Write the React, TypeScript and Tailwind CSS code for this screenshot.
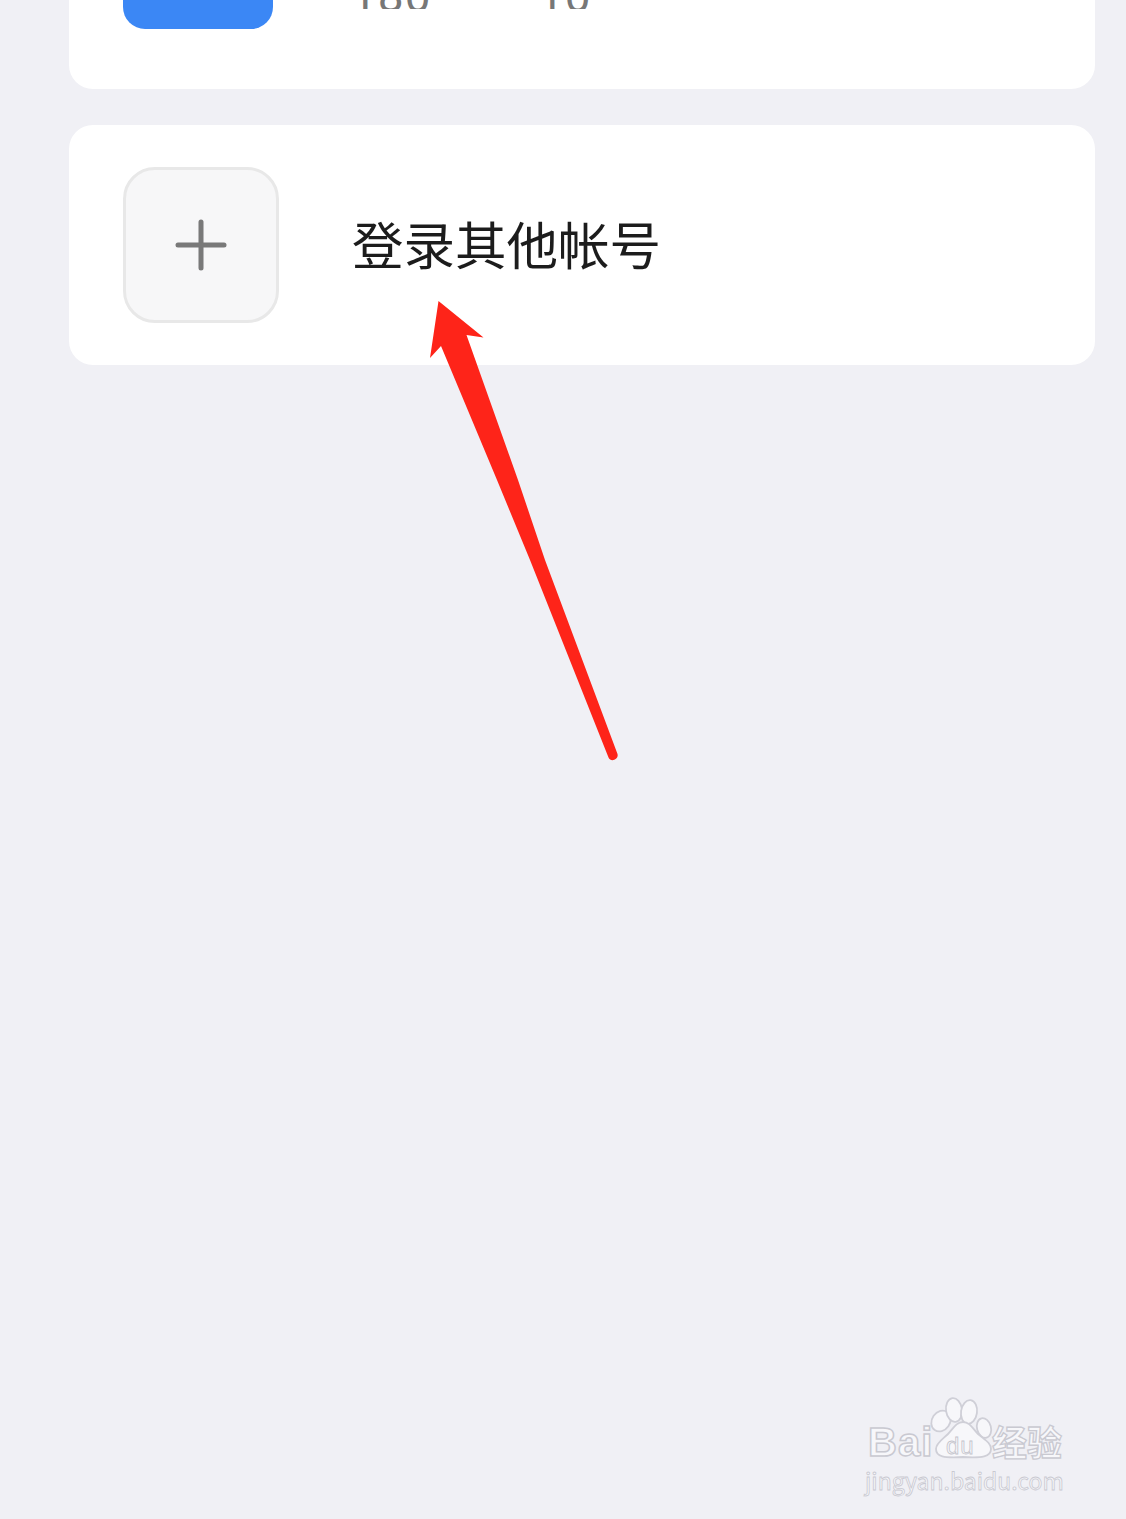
import React from "react";

const cjk = "font-['Noto_Sans_CJK_SC','Liberation_Sans',sans-serif]";

const Arrow = () => (
  <svg className="absolute left-0 top-0" width="1126" height="800" viewBox="0 0 1126 800" fill="none">
    <path
      d="M438.5 301 L483.5 337.5 L466.5 335 L518 480 L545 560 L617.5 754 C619 759 611 763 608.5 757.5 L530 560 L497 480 L441 346 L430 358 Z"
      fill="#FE2419"
    />
  </svg>
);

const Watermark = () => (
  <div className={`absolute left-[860px] top-[1395px] h-[105px] w-[210px] ${cjk} text-[#f7f7fa]`}>
    <svg className="absolute left-0 top-0" width="210" height="105" viewBox="0 0 210 105" fill="#f7f7fa" stroke="#cfcfd7" strokeWidth="1.8">
      <ellipse cx="81" cy="26" rx="9" ry="11" transform="rotate(35 81 26)" />
      <ellipse cx="94" cy="15" rx="8" ry="12" transform="rotate(-8 94 15)" />
      <ellipse cx="109" cy="17" rx="8" ry="12" transform="rotate(8 109 17)" />
      <ellipse cx="124" cy="33" rx="7" ry="10" transform="rotate(-15 124 33)" />
      <path d="M103 27 C110 27 113 34 118 39 C125 45 131 48 131 54 C131 62 122 63 103 62 C84 63 76 62 76 54 C76 48 83 44 88 39 C93 34 96 27 103 27 Z" />
    </svg>
    <span className="absolute left-[8px] top-[24px] text-[40px] font-bold leading-[46px] tracking-[1px] font-['Liberation_Sans',sans-serif] [-webkit-text-stroke:1.5px_#c9c9d1]">Bai</span>
    <span className="absolute left-[86px] top-[38px] text-[24px] leading-[26px] tracking-[1px] font-['Liberation_Sans',sans-serif] [-webkit-text-stroke:0.8px_#c4c4cc]">du</span>
    <span className="absolute left-[132px] top-[26px] text-[35px] font-bold leading-[40px] [-webkit-text-stroke:1.3px_#c9c9d1]">经验</span>
    <span className="absolute left-[5px] top-[72px] whitespace-nowrap text-[23px] leading-[26px] [-webkit-text-stroke:0.8px_#c9c9d1]">jingyan.baidu.com</span>
  </div>
);

export default function App() {
  return (
    <div className="relative h-[1519px] w-[1126px] overflow-hidden bg-[#f0f0f5]">
      <div className="flex flex-col gap-[36px] pl-[69px] pr-[31px]">
        {/* Card scrolled off the top */}
        <div className="flex h-[89px] items-start rounded-b-[24px] bg-white pl-[54px]">
          <div className="h-[29px] w-[150px] rounded-b-[22px] bg-[#3b87f5]" />
          <div className="flex h-[9px] items-end overflow-hidden pl-[78px] text-[46px] leading-[46px] text-[#777] font-['Roboto',sans-serif]">
            <span className="mb-[-10px] w-[187px] tracking-[1px]">180</span>
            <span className="mb-[-10px] tracking-[1px]">10</span>
          </div>
        </div>

        {/* Add account */}
        <div className="flex h-[240px] items-center rounded-[24px] bg-white pl-[54px]">
          <div className="flex size-[156px] items-center justify-center rounded-[32px] border-[3px] border-[#e8e8e8] bg-[#f7f7f8]">
            <svg width="52" height="52" viewBox="0 0 52 52" fill="none" stroke="#797979" strokeWidth="5" strokeLinecap="round">
              <path d="M26 3V49" />
              <path d="M3 26H49" />
            </svg>
          </div>
          <span className={`pb-[5px] pl-[73px] text-[51.5px] leading-[60px] text-[#1c1c1c] ${cjk}`}>登录其他帐号</span>
        </div>
      </div>

      <Arrow />
      <Watermark />
    </div>
  );
}
